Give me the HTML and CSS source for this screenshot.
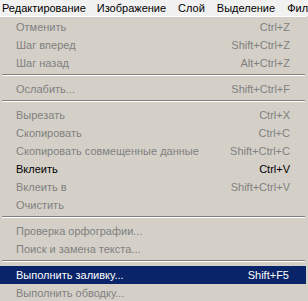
FILE: index.html
```html
<!DOCTYPE html>
<html lang="ru">
<head>
    <meta charset="UTF-8">
    <meta name="viewport" content="width=device-width, initial-scale=1.0">
    <title>Редактирование</title>
    <link rel="stylesheet" href="styles.css">
</head>
<body>
    <div class="menubar">
        <span class="bar-item open">Редактирование</span>
        <span class="bar-item">Изображение</span>
        <span class="bar-item">Слой</span>
        <span class="bar-item">Выделение</span>
        <span class="bar-item">Фильтр</span>
    </div>
    <div class="menu">
        <div class="item disabled"><span>Отменить</span><span class="key">Ctrl+Z</span></div>
        <div class="item disabled"><span>Шаг вперед</span><span class="key">Shift+Ctrl+Z</span></div>
        <div class="item disabled"><span>Шаг назад</span><span class="key">Alt+Ctrl+Z</span></div>
        <div class="separator"></div>
        <div class="item disabled"><span>Ослабить...</span><span class="key">Shift+Ctrl+F</span></div>
        <div class="separator"></div>
        <div class="item disabled"><span>Вырезать</span><span class="key">Ctrl+X</span></div>
        <div class="item disabled"><span>Скопировать</span><span class="key">Ctrl+C</span></div>
        <div class="item disabled"><span>Скопировать совмещенные данные</span><span class="key">Shift+Ctrl+C</span></div>
        <div class="item"><span>Вклеить</span><span class="key">Ctrl+V</span></div>
        <div class="item disabled"><span>Вклеить в</span><span class="key">Shift+Ctrl+V</span></div>
        <div class="item disabled"><span>Очистить</span></div>
        <div class="separator"></div>
        <div class="item disabled"><span>Проверка орфографии...</span></div>
        <div class="item disabled"><span>Поиск и замена текста...</span></div>
        <div class="separator"></div>
        <div class="item active"><span>Выполнить заливку...</span><span class="key">Shift+F5</span></div>
        <div class="item disabled"><span>Выполнить обводку...</span></div>
        <div class="separator"></div>
    </div>
</body>
</html>
```

FILE: styles.css
```css
body {
    margin: 0;
    width: 308px;
    height: 301px;
    overflow: hidden;
    background-color: #d4d0c8;
    font-family: "Liberation Sans", Arial, sans-serif;
    font-size: 11px;
}

.menubar {
    display: flex;
    height: 16px;
    line-height: 16px;
    background-color: #f1f1f1;
    white-space: nowrap;
    overflow: hidden;
}

.bar-item {
    padding: 0 6px;
    color: #000;
}

.bar-item.open {
    padding-left: 2px;
    padding-right: 5px;
}

.menu {
    border-top: 1px solid #fff;
    padding-top: 1px;
    width: 307px;
}

.item {
    display: flex;
    height: 18px;
    line-height: 18px;
    padding: 0 17px 0 16px;
    color: #000;
    white-space: nowrap;
}

.item .key {
    margin-left: auto;
}

.disabled {
    color: #808080;
}

.active {
    background-color: #0a246a;
    color: #fff;
    width: 273px;
}

.separator {
    height: 6px;
    margin: 0 2px;
    width: 303px;
    box-sizing: border-box;
    position: relative;
}

.separator::after {
    content: "";
    display: block;
    margin-top: 2px;
    border-top: 1px solid #808080;
    border-bottom: 1px solid #fff;
}
```
